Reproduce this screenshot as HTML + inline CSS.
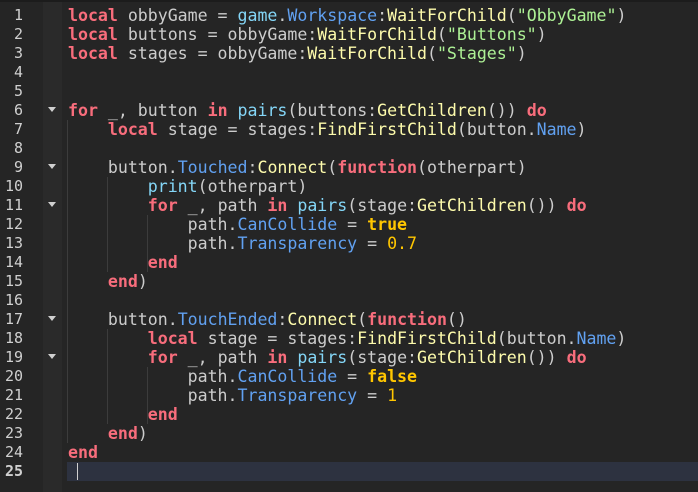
<!DOCTYPE html>
<html><head><style>
body{margin:0;width:698px;height:492px;background:#252525;overflow:hidden;position:relative;font-family:"DejaVu Sans Mono","Liberation Mono",monospace;}
.top{position:absolute;left:0;top:0;width:698px;height:2px;background:#1c1c1c}
.gut{position:absolute;left:0;top:2px;width:43px;height:490px;background:#252525}
.fold{position:absolute;left:43px;top:2px;width:19px;height:490px;background:#2a2a2a}
.hl{position:absolute;left:67px;top:462px;width:631px;height:19px;background:#2d3240}
.n{position:absolute;left:0;width:23px;text-align:right;color:#d0d0d0;font-size:15px;line-height:19px}
.l{position:absolute;left:68px;white-space:pre;color:#cccccc;font-size:16.6px;line-height:19px;letter-spacing:-0.02px}
.k{color:#f86d7c;font-weight:bold}
.p{color:#61a1f1}
.f{color:#fdfbac}
.s{color:#adf195}
.b{color:#ffc600;font-weight:bold}
.num{color:#ffc600}
.g{color:#84d6f7}
.ar{position:absolute;left:48px;width:0;height:0;border-left:4px solid transparent;border-right:4px solid transparent;border-top:5px solid #cfcfcf}
.ig{position:absolute;width:1px;background:#3c3c3c}
.cur{position:absolute;left:77px;top:463px;width:1px;height:17px;background:#d0d0d0}
</style></head><body>
<div class="top"></div><div class="gut"></div><div class="fold"></div><div class="hl"></div><div class="cur"></div>
<div class="ig" style="left:67px;top:120px;height:323px"></div>
<div class="ig" style="left:107px;top:177px;height:95px"></div>
<div class="ig" style="left:147px;top:215px;height:57px"></div>
<div class="ig" style="left:107px;top:329px;height:95px"></div>
<div class="ig" style="left:147px;top:367px;height:57px"></div>
<div class="ar" style="top:107px"></div>
<div class="ar" style="top:164px"></div>
<div class="ar" style="top:202px"></div>
<div class="ar" style="top:316px"></div>
<div class="ar" style="top:354px"></div>
<div class="n" style="top:6px">1</div><div class="n" style="top:25px">2</div><div class="n" style="top:44px">3</div><div class="n" style="top:63px">4</div><div class="n" style="top:82px">5</div><div class="n" style="top:101px">6</div><div class="n" style="top:120px">7</div><div class="n" style="top:139px">8</div><div class="n" style="top:158px">9</div><div class="n" style="top:177px">10</div><div class="n" style="top:196px">11</div><div class="n" style="top:215px">12</div><div class="n" style="top:234px">13</div><div class="n" style="top:253px">14</div><div class="n" style="top:272px">15</div><div class="n" style="top:291px">16</div><div class="n" style="top:310px">17</div><div class="n" style="top:329px">18</div><div class="n" style="top:348px">19</div><div class="n" style="top:367px">20</div><div class="n" style="top:386px">21</div><div class="n" style="top:405px">22</div><div class="n" style="top:424px">23</div><div class="n" style="top:443px">24</div><div class="n" style="top:462px;font-weight:bold">25</div>
<div class="l" style="top:6px"><span class="k">local</span> obbyGame = <span class="g">game</span>.<span class="p">Workspace</span>:<span class="f">WaitForChild</span>(<span class="s">"ObbyGame"</span>)</div>
<div class="l" style="top:25px"><span class="k">local</span> buttons = obbyGame:<span class="f">WaitForChild</span>(<span class="s">"Buttons"</span>)</div>
<div class="l" style="top:44px"><span class="k">local</span> stages = obbyGame:<span class="f">WaitForChild</span>(<span class="s">"Stages"</span>)</div>
<div class="l" style="top:101px"><span class="k">for</span> _, button <span class="k">in</span> <span class="g">pairs</span>(buttons:<span class="f">GetChildren</span>()) <span class="k">do</span></div>
<div class="l" style="top:120px">    <span class="k">local</span> stage = stages:<span class="f">FindFirstChild</span>(button.<span class="p">Name</span>)</div>
<div class="l" style="top:158px">    button.<span class="p">Touched</span>:<span class="f">Connect</span>(<span class="k">function</span>(otherpart)</div>
<div class="l" style="top:177px">        <span class="g">print</span>(otherpart)</div>
<div class="l" style="top:196px">        <span class="k">for</span> _, path <span class="k">in</span> <span class="g">pairs</span>(stage:<span class="f">GetChildren</span>()) <span class="k">do</span></div>
<div class="l" style="top:215px">            path.<span class="p">CanCollide</span> = <span class="b">true</span></div>
<div class="l" style="top:234px">            path.<span class="p">Transparency</span> = <span class="num">0.7</span></div>
<div class="l" style="top:253px">        <span class="k">end</span></div>
<div class="l" style="top:272px">    <span class="k">end</span>)</div>
<div class="l" style="top:310px">    button.<span class="p">TouchEnded</span>:<span class="f">Connect</span>(<span class="k">function</span>()</div>
<div class="l" style="top:329px">        <span class="k">local</span> stage = stages:<span class="f">FindFirstChild</span>(button.<span class="p">Name</span>)</div>
<div class="l" style="top:348px">        <span class="k">for</span> _, path <span class="k">in</span> <span class="g">pairs</span>(stage:<span class="f">GetChildren</span>()) <span class="k">do</span></div>
<div class="l" style="top:367px">            path.<span class="p">CanCollide</span> = <span class="b">false</span></div>
<div class="l" style="top:386px">            path.<span class="p">Transparency</span> = <span class="num">1</span></div>
<div class="l" style="top:405px">        <span class="k">end</span></div>
<div class="l" style="top:424px">    <span class="k">end</span>)</div>
<div class="l" style="top:443px"><span class="k">end</span></div>
</body></html>
